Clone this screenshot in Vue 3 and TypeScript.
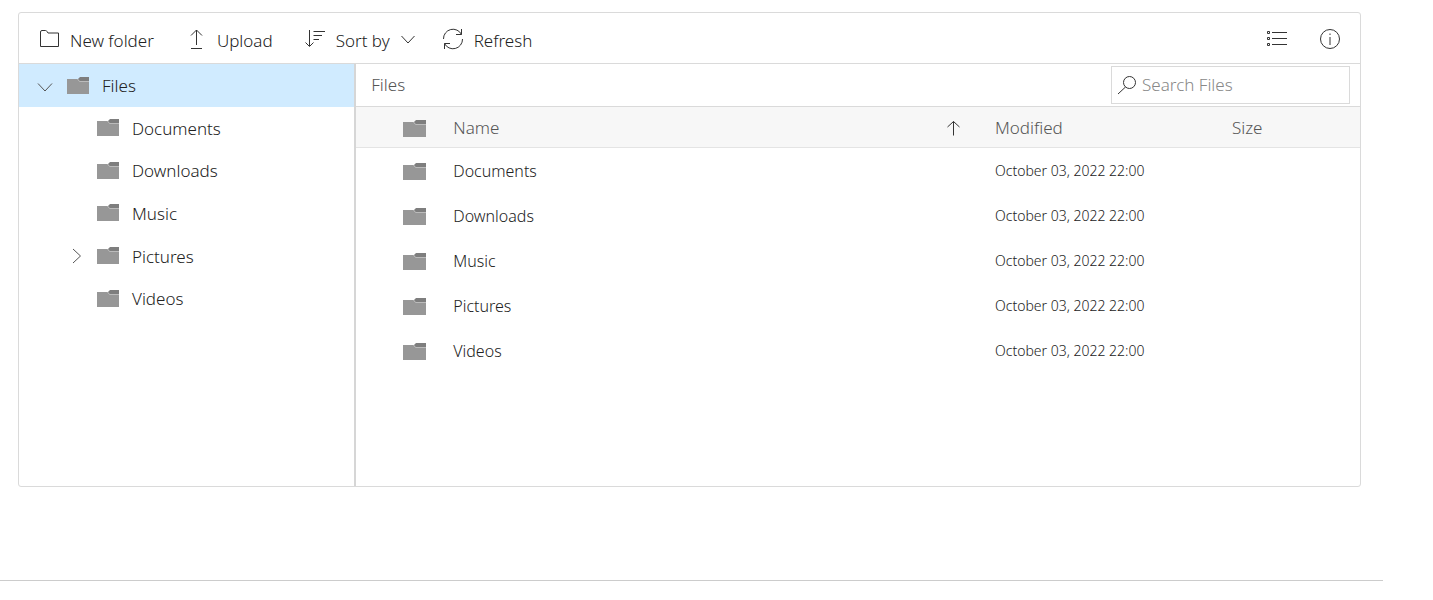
<script setup lang="ts">
import { computed, ref } from 'vue'

interface FileEntry {
  name: string
  modified: string
  size: string
  hasChildren?: boolean
}

const modified = 'October 03, 2022 22:00'
const files: FileEntry[] = [
  { name: 'Documents', modified, size: '' },
  { name: 'Downloads', modified, size: '' },
  { name: 'Music', modified, size: '' },
  { name: 'Pictures', modified, size: '', hasChildren: true },
  { name: 'Videos', modified, size: '' },
]

const expanded = ref(true)
const ascending = ref(true)
const query = ref('')

const visibleFiles = computed(() => {
  const matches = files.filter((f) => f.name.toLowerCase().includes(query.value.toLowerCase()))
  return ascending.value ? matches : matches.reverse()
})
</script>

<template>
  <main class="page">
    <section class="manager" aria-label="File manager">
      <div class="toolbar" role="toolbar">
        <button type="button" class="tool new-folder">
          <svg class="icon" width="22" height="22" viewBox="0 0 22 22">
            <path d="M1.500 18.500V4q0-1.500 1.500-1.500H6.500q1 0 1.500 1l1 1.500H19.500V18.500z" />
          </svg>
          <span>New folder</span>
        </button>
        <button type="button" class="tool upload">
          <svg class="icon" width="22" height="22" viewBox="0 0 22 22">
            <path d="M11.500 17V2M6 7.500L11.500 2l5.500 5.500M6 20.500h11" />
          </svg>
          <span>Upload</span>
        </button>
        <button type="button" class="tool sort">
          <svg class="icon" width="22" height="22" viewBox="0 0 22 22">
            <path d="M5.500 2v16M1.500 14.500l4 4 4-4M9.500 3.500H21M9.500 7.500H18M9.500 11.500H15" />
          </svg>
          <span>Sort by</span>
          <svg class="icon caret" width="16" height="16" viewBox="0 0 16 16">
            <path d="M1.500 5L8 12l6.500-7" />
          </svg>
        </button>
        <button type="button" class="tool refresh">
          <svg class="icon" width="22" height="22" viewBox="0 0 22 22">
            <path d="M1.500 11A9.500 9.500 0 0 1 19.500 6.500M19.500 1v5.500H14M20.500 11A9.500 9.500 0 0 1 2.500 15.500M2.500 21v-5.500H8" />
          </svg>
          <span>Refresh</span>
        </button>
        <div class="tools-end">
          <button type="button" class="tool" aria-label="View">
            <svg class="icon" width="22" height="22" viewBox="0 0 22 22">
              <path d="M6 4.500h15M6 10.500h15M6 16.500h15" />
              <path d="M1.500 3.500h2v2h-2zM1.500 9.500h2v2h-2zM1.500 15.500h2v2h-2z" />
            </svg>
          </button>
          <button type="button" class="tool" aria-label="Details">
            <svg class="icon" width="22" height="22" viewBox="0 0 22 22">
              <circle cx="11" cy="11" r="9.500" />
              <path d="M11 9v8M11 5.500v1.500" />
            </svg>
          </button>
        </div>
      </div>

      <div class="body">
        <nav class="tree" aria-label="Folders">
          <button type="button" class="node root" :aria-expanded="expanded" @click="expanded = !expanded">
            <svg class="icon arrow" width="16" height="16" viewBox="0 0 16 16"><path d="M1 5.500L8 13l7-7.500" /></svg>
            <svg class="folder" width="24" height="18" viewBox="0 0 24 18">
              <path class="front" d="M0 2h22v15H0z" />
              <path class="tab" d="M13 0h9v4H13l-2-2z" />
              <path class="edge" d="M10.500 2l2 2.500H22" />
            </svg>
            <span>Files</span>
          </button>
          <div v-if="expanded" class="children">
            <button v-for="file in files" :key="file.name" type="button" class="node child">
              <svg class="icon arrow" width="16" height="16" viewBox="0 0 16 16">
                <path v-if="file.hasChildren" d="M6 1l7.500 7L6 15" />
              </svg>
              <svg class="folder" width="24" height="18" viewBox="0 0 24 18">
                <path class="front" d="M0 2h22v15H0z" />
                <path class="tab" d="M13 0h9v4H13l-2-2z" />
                <path class="edge" d="M10.500 2l2 2.500H22" />
              </svg>
              <span>{{ file.name }}</span>
            </button>
          </div>
        </nav>

        <div class="content">
          <div class="pathbar">
            <a class="crumb" href="#files">Files</a>
            <label class="search">
              <svg class="icon" width="20" height="20" viewBox="0 0 20 20">
                <circle cx="12.500" cy="7.500" r="6" /><path d="M8.500 12L1 19" />
              </svg>
              <input v-model="query" type="text" placeholder="Search Files" aria-label="Search Files" />
            </label>
          </div>
          <table class="grid">
            <thead>
              <tr>
                <th class="col-icon" scope="col" aria-label="Type">
                  <svg class="folder" width="24" height="18" viewBox="0 0 24 18">
                    <path class="front" d="M0 2h23v15H0z" />
                    <path class="tab" d="M13 0h10v4H13l-2-2z" />
                    <path class="edge" d="M10.500 2l2 2.500H23" />
                  </svg>
                </th>
                <th class="col-name" scope="col">
                  <button type="button" class="sorter" @click="ascending = !ascending">
                    <span>Name</span>
                    <svg class="icon" width="16" height="16" viewBox="0 0 16 16">
                      <path v-if="ascending" d="M8.500 15.500V1.500M2.500 7l6-5.500 6 5.500" />
                      <path v-else d="M8.500 1v14M2.500 9.500l6 5.500 6-5.500" />
                    </svg>
                  </button>
                </th>
                <th class="col-modified" scope="col">Modified</th>
                <th class="col-size" scope="col">Size</th>
              </tr>
            </thead>
            <tbody>
              <tr v-for="file in visibleFiles" :key="file.name">
                <td class="col-icon">
                  <svg class="folder" width="24" height="18" viewBox="0 0 24 18">
                    <path class="front" d="M0 2h23v15H0z" />
                    <path class="tab" d="M13 0h10v4H13l-2-2z" />
                    <path class="edge" d="M10.500 2l2 2.500H23" />
                  </svg>
                </td>
                <td class="name">{{ file.name }}</td>
                <td class="date">{{ file.modified }}</td>
                <td>{{ file.size }}</td>
              </tr>
            </tbody>
          </table>
        </div>
      </div>
    </section>
    <hr class="divider" />
  </main>
</template>

<style>
body {
  margin: 0;
  background: #fff;
}
</style>

<style scoped>
.page {
  padding-top: 12px;
  font-family: "Noto Sans", "Open Sans", sans-serif;
  font-size: 17px;
  font-weight: 300;
  line-height: 24px;
  color: #222;
}
button,
input {
  font: inherit;
  color: inherit;
  border: 0;
  padding: 0;
  margin: 0;
  background: none;
}
.manager {
  margin: 0 72px 0 18px;
  border: 1px solid #dadada;
  border-radius: 3px;
  overflow: hidden;
}
.icon {
  flex: none;
  fill: none;
  stroke: #333;
  stroke-width: 1;
}
.folder {
  flex: none;
  display: block;
}
.front {
  fill: #979797;
}
.tab {
  fill: #7e7e7e;
}
.edge {
  fill: none;
  stroke: #bbb;
}
.toolbar {
  display: flex;
  align-items: center;
  height: 48px;
  padding: 2px 19px 0 20px;
  border-bottom: 1px solid #dadada;
}
.tool {
  display: flex;
  align-items: center;
  gap: 10px;
  height: 48px;
}
.tool span {
  padding-top: 3px;
}
.new-folder {
  gap: 9px;
}
.upload,
.sort {
  margin-left: 31px;
}
.refresh {
  margin-left: 26px;
}
.tools-end {
  display: flex;
  gap: 31px;
  margin-left: auto;
}
.body {
  display: flex;
  min-height: 422px;
}
.tree {
  flex: 0 0 25%;
  border-right: 2px solid #d6d6d6;
}
.node {
  display: flex;
  align-items: center;
  width: 100%;
  text-align: left;
}
.node span {
  padding-top: 1px;
}
.arrow {
  margin-right: 14px;
  stroke: #555;
}
.node .folder {
  margin-right: 11px;
}
.root {
  height: 43px;
  padding-left: 18px;
  background: #d0ebff;
}
.children {
  display: flex;
  flex-direction: column;
  height: 213px;
}
.child {
  flex: 1;
  padding-left: 48px;
}
.content {
  flex: 1;
  min-width: 0;
}
.pathbar {
  display: flex;
  align-items: center;
  justify-content: space-between;
  height: 42px;
  padding: 0 10px 0 15px;
  border-bottom: 1px solid #dadada;
}
.crumb {
  color: #555;
  text-decoration: none;
}
.search {
  display: flex;
  align-items: center;
  gap: 5px;
  box-sizing: border-box;
  width: 239px;
  height: 38px;
  padding: 0 5px;
  border: 1px solid #dadada;
}
.search input {
  flex: 1;
  min-width: 0;
  outline: 0;
}
.search input::placeholder {
  color: #888;
  opacity: 1;
}
.grid {
  width: 100%;
  table-layout: fixed;
  border-collapse: separate;
  border-spacing: 0;
}
th,
td {
  padding: 0;
  text-align: left;
  font-weight: 300;
}
th {
  height: 38px;
  padding-top: 2px;
  color: #555;
  background: #f7f7f7;
  border-bottom: 1px solid #e4e4e4;
}
td {
  height: 45px;
  font-size: 16px;
}
.col-icon {
  width: 97px;
}
.col-icon .folder {
  margin: 2px 0 0 47px;
}
.col-modified {
  width: 237px;
}
.col-size {
  width: 128px;
}
.sorter {
  display: flex;
  align-items: center;
  justify-content: space-between;
  width: 100%;
  padding-right: 34px;
}
.date {
  font-size: 14px;
}
.divider {
  margin: 93px 50px 0 0;
  border: 0;
  border-top: 1px solid #ccc;
}
</style>
